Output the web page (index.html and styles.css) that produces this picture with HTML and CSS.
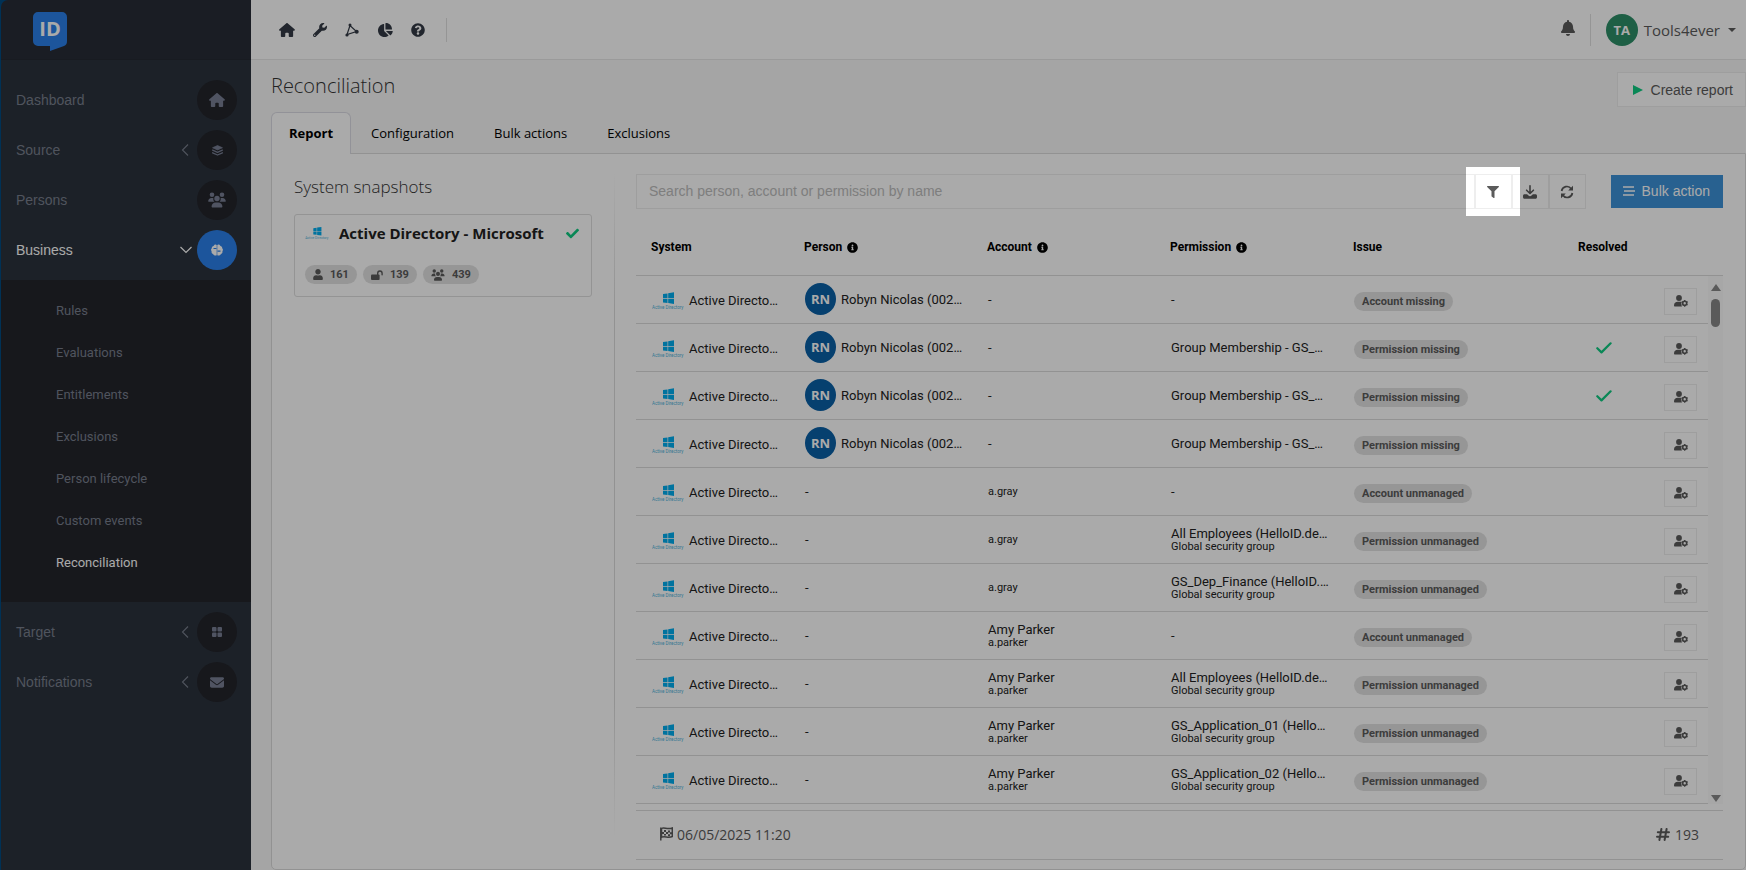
FILE: index.html
```html
<!DOCTYPE html>
<html lang="en">
<head>
    <meta charset="UTF-8">
    <title>Reconciliation - HelloID</title>
    <link rel="stylesheet" href="styles.css">
</head>
<body>

<!-- Icon sprite -->
<svg class="sprite" aria-hidden="true">
    <symbol id="i-home" viewBox="0 0 576 512"><path d="M575.8 255.5c0 18-15 32.1-32 32.1h-32l.7 160.2c0 2.7-.2 5.4-.5 8.1V472c0 22.1-17.9 40-40 40H392c-22.1 0-40-17.9-40-40V384c0-17.7-14.3-32-32-32H256c-17.7 0-32 14.3-32 32v88c0 22.1-17.9 40-40 40H104c-22.1 0-40-17.9-40-40V287.6H32c-18 0-32-14-32-32.1c0-9 3-17 10-24L266.4 8c7-7 15-8 22-8s15 2 21 7L564.8 231.5c8 7 12 15 11 24z"/></symbol>
    <symbol id="i-wrench" viewBox="0 0 512 512"><path d="M507.73 109.1c-2.24-9.03-13.54-12.09-20.12-5.51l-74.36 74.36-67.88-11.31-11.31-67.88 74.36-74.36c6.62-6.62 3.43-17.9-5.66-20.16-47.38-11.74-99.55.91-136.58 37.93-39.64 39.64-50.55 97.1-34.05 147.2L18.74 402.76c-24.99 24.99-24.99 65.51 0 90.5 24.99 24.99 65.51 24.99 90.5 0l213.21-213.21c50.12 16.71 107.47 5.68 147.37-34.22 37.07-37.07 49.7-89.32 37.91-136.73zM64 472c-13.25 0-24-10.75-24-24 0-13.26 10.75-24 24-24s24 10.74 24 24c0 13.25-10.75 24-24 24z"/></symbol>
    <symbol id="i-nodes" viewBox="0 0 14 14"><path d="M5 2.5L2 11.500L11.500 8.500Z" fill="none" stroke="currentColor" stroke-width="1.2"/><circle cx="5" cy="2" r="1.500"/><circle cx="2" cy="12" r="1.600"/><circle cx="11.700" cy="8.700" r="2"/></symbol>
    <symbol id="i-pie" viewBox="0 0 576 512"><path d="M304 240V16.6c0-9 7-16.6 16-16.6C443.7 0 544 100.3 544 224c0 9-7.6 16-16.6 16H304zM32 272C32 150.7 122.1 50.3 239 34.3c9.2-1.3 17 6.1 17 15.4V288L412.5 444.5c6.7 6.7 6.2 17.7-1.5 23.1C371.8 495.6 323.8 512 272 512C139.5 512 32 404.6 32 272zm526.4 16c9.3 0 16.6 7.8 15.4 17c-7.7 55.9-34.6 105.6-73.9 142.3c-6 5.6-15.4 5.2-21.2-.7L320 288H558.4z"/></symbol>
    <symbol id="i-question" viewBox="0 0 512 512"><path d="M504 256c0 136.997-111.043 248-248 248S8 392.997 8 256C8 119.083 119.043 8 256 8s248 111.083 248 248zM262.655 90c-54.497 0-89.255 22.957-116.549 63.758-3.536 5.286-2.353 12.415 2.715 16.258l34.699 26.31c5.205 3.947 12.621 3.008 16.665-2.122 17.864-22.658 30.113-35.797 57.303-35.797 20.429 0 45.698 13.148 45.698 32.958 0 14.976-12.363 22.667-32.534 33.976C247.128 238.528 216 254.941 216 296v4c0 6.627 5.373 12 12 12h56c6.627 0 12-5.373 12-12v-1.333c0-28.462 83.186-29.647 83.186-106.667 0-58.002-60.165-102-116.531-102zM256 338c-25.365 0-46 20.635-46 46 0 25.364 20.635 46 46 46s46-20.636 46-46c0-25.365-20.635-46-46-46z"/></symbol>
    <symbol id="i-info" viewBox="0 0 512 512"><path d="M256 8C119.043 8 8 119.083 8 256c0 136.997 111.043 248 248 248s248-111.003 248-248C504 119.083 392.957 8 256 8zm0 110c23.196 0 42 18.804 42 42s-18.804 42-42 42-42-18.804-42-42 18.804-42 42-42zm56 254c0 6.627-5.373 12-12 12h-88c-6.627 0-12-5.373-12-12v-24c0-6.627 5.373-12 12-12h12v-64h-12c-6.627 0-12-5.373-12-12v-24c0-6.627 5.373-12 12-12h64c6.627 0 12 5.373 12 12v100h12c6.627 0 12 5.373 12 12v24z"/></symbol>
    <symbol id="i-bell" viewBox="0 0 448 512"><path d="M224 512c35.32 0 63.97-28.65 63.97-64H160.03c0 35.35 28.65 64 63.97 64zm215.39-149.71c-19.32-20.76-55.47-51.99-55.47-154.29 0-77.7-54.48-139.9-127.94-155.16V32c0-17.67-14.32-32-31.98-32s-31.98 14.33-31.98 32v20.84C118.56 68.1 64.08 130.3 64.08 208c0 102.3-36.15 133.53-55.47 154.29-6 6.45-8.66 14.16-8.61 21.71.11 16.4 12.98 32 32.1 32h383.8c19.12 0 32-15.6 32.1-32 .05-7.55-2.61-15.27-8.61-21.71z"/></symbol>
    <symbol id="i-layers" viewBox="0 0 12 12"><path d="M6 .6L11.4 3L6 5.4L.6 3Z" stroke="currentColor" stroke-width=".8" stroke-linejoin="round"/><path d="M.7 5.6L6 8L11.3 5.6M.7 8.5L6 10.9L11.3 8.5" fill="none" stroke="currentColor" stroke-width="1.4" stroke-linecap="round" stroke-linejoin="round"/></symbol>
    <symbol id="i-users" viewBox="0 0 18 16"><circle cx="4" cy="2.7" r="2.3"/><circle cx="14" cy="2.7" r="2.3"/><circle cx="9" cy="6.5" r="2.7"/><path d="M.2 9.3C.2 7.3 1.6 6 3.4 6h1.2c.3 0 .6 0 .8.1c-.4 1.5 0 2.7 1 3.7H.7c-.3 0-.5-.2-.5-.5zM17.8 9.3c0-2-1.4-3.3-3.2-3.3h-1.2c-.3 0-.6 0-.8.1c.4 1.5 0 2.700-1 3.700h5.700c.3 0 .5-.2.5-.5zM3.6 14.5c0-2.300 1.700-4 4-4h2.800c2.300 0 4 1.700 4 4c0 .6-.4 1-1 1H4.600c-.6 0-1-.4-1-1z"/></symbol>
    <symbol id="i-brain" viewBox="0 0 12 12"><path d="M5.7 1v10.2C3.9 12 2.5 11.2 2.2 9.9C.9 9.5.3 8.5.6 7.3C-.2 6.3-.1 4.9.8 4.2C.8 2.9 1.5 2.1 2.6 2C3 .5 4.7 0 5.7 1zM6.3 1v10.2C8.100 12 9.500 11.200 9.800 9.900c1.300-.4 1.900-1.400 1.600-2.600c.8-1 .7-2.400-.2-3.100c0-1.300-.7-2.100-1.800-2.200C9 .5 7.300 0 6.300 1z"/><path d="M2.500 4.500h3M6.500 7.200h3" stroke="#2b80ea" stroke-width="1.200"/></symbol>
    <symbol id="i-grid" viewBox="0 0 10 10"><rect width="4.5" height="4.5" rx="1"/><rect x="5.5" width="4.5" height="4.5" rx="1"/><rect y="5.5" width="4.5" height="4.5" rx="1"/><rect x="5.5" y="5.5" width="4.5" height="4.5" rx="1"/></symbol>
    <symbol id="i-mail" viewBox="0 64 512 384"><path d="M48 64C21.5 64 0 85.5 0 112c0 15.1 7.1 29.3 19.2 38.4L236.8 313.6c11.4 8.5 27 8.5 38.4 0L492.8 150.4c12.1-9.1 19.2-23.3 19.2-38.4c0-26.5-21.5-48-48-48H48zM0 176V384c0 35.3 28.7 64 64 64H448c35.3 0 64-28.7 64-64V176L294.4 339.2c-22.8 17.1-54 17.1-76.8 0L0 176z"/></symbol>
    <symbol id="i-left" viewBox="0 0 8 12"><path d="M7 .5L1.5 6L7 11.5" fill="none" stroke="currentColor" stroke-width="1.1"/></symbol>
    <symbol id="i-down" viewBox="0 0 12 8"><path d="M.5 1L6 6.5L11.5 1" fill="none" stroke="currentColor" stroke-width="1.2"/></symbol>
    <symbol id="i-play" viewBox="0 0 10 10"><path d="M0 0L10 5L0 10Z"/></symbol>
    <symbol id="i-tick" viewBox="0 0 512 512"><path d="M173.898 439.404l-166.4-166.4c-9.997-9.997-9.997-26.206 0-36.204l36.203-36.204c9.997-9.998 26.207-9.998 36.204 0L192 312.69 432.095 72.596c9.997-9.997 26.207-9.997 36.204 0l36.203 36.204c9.997 9.997 9.997 26.206 0 36.204l-294.4 294.401c-9.998 9.997-26.207 9.997-36.204-.001z"/></symbol>
    <symbol id="i-check" viewBox="0 0 16 12"><path d="M1.3 6.200L5.500 10.400L14.600 1.300" fill="none" stroke="currentColor" stroke-width="2.200" stroke-linecap="round" stroke-linejoin="round"/></symbol>
    <symbol id="i-user" viewBox="0 0 448 512"><path d="M224 256c70.7 0 128-57.3 128-128S294.7 0 224 0 96 57.3 96 128s57.3 128 128 128zm89.6 32h-16.7c-22.2 10.2-46.9 16-72.9 16s-50.6-5.8-72.9-16h-16.7C60.2 288 0 348.2 0 422.4V464c0 26.5 21.5 48 48 48h352c26.5 0 48-21.5 48-48v-41.6c0-74.2-60.2-134.4-134.4-134.4z"/></symbol>
    <symbol id="i-unlock" viewBox="0 0 12 10"><rect y="4.5" width="8.6" height="5.5" rx="1"/><path d="M6.7 5V3.2a2.2 2.2 0 0 1 4.400 0V4.700" fill="none" stroke="currentColor" stroke-width="1.4" stroke-linecap="round"/></symbol>
    <symbol id="i-filter" viewBox="0 0 512 512"><path d="M487.976 0H24.028C2.71 0-8.047 25.866 7.058 40.971L192 225.941V432c0 7.831 3.821 15.17 10.237 19.662l80 55.98C298.02 518.69 320 507.493 320 487.98V225.941l184.947-184.97C520.021 25.896 509.338 0 487.976 0z"/></symbol>
    <symbol id="i-download" viewBox="0 0 14 14"><path d="M7 .8V8M3.6 5.2L7 8.5L10.4 5.2" fill="none" stroke="currentColor" stroke-width="1.6" stroke-linecap="round" stroke-linejoin="round"/><path d="M1.5 9.3h2.6l1.4 1.3c.9.8 2.1.8 3 0l1.4-1.300h2.600c.8 0 1.500.7 1.500 1.500v1.500c0 .9-.7 1.500-1.500 1.500h-11C.7 13.800 0 13.200 0 12.300v-1.500c0-.8.7-1.500 1.500-1.500z"/></symbol>
    <symbol id="i-refresh" viewBox="0 0 14 14"><path d="M1.6 6A5.3 5.3 0 0 1 11.3 4M12.4 8A5.3 5.3 0 0 1 2.7 10" fill="none" stroke="currentColor" stroke-width="1.7"/><path d="M13 .8V5.600H8.200ZM1 13.200V8.400H5.800Z"/></symbol>
    <symbol id="i-bars" viewBox="0 0 12 10"><path d="M0 1h11M1 5h11M0 9h11" stroke="currentColor" stroke-width="1.6"/></symbol>
    <symbol id="i-usergear" viewBox="0 0 14 12"><circle cx="5" cy="3" r="2.9"/><path d="M0 10.4C0 8.200 1.600 6.800 3.700 6.800h2.600c.6 0 1 .1 1.500.3c-.8 1.500-.6 3 .2 4.400H.9c-.5 0-.9-.4-.9-1.100z"/><circle cx="10.700" cy="8.300" r="2" fill="none" stroke="currentColor" stroke-width="1.600"/><path d="M10.700 4.900v1M10.700 10.700v1M7.800 6.600l.9.500M12.700 9.500l.9.500M7.800 10l.9-.5M12.700 7.100l.9-.5" stroke="currentColor" stroke-width="1.300"/></symbol>
    <symbol id="i-flag" viewBox="0 0 13 14"><path d="M.8.5V13.5" stroke="currentColor" stroke-width="1.5"/><path d="M1.5 1.500C4-.2 7 2.800 12.300 1V9.500C8 11.500 5 8.500 1.500 10.200Z" fill="none" stroke="currentColor" stroke-width="1.500"/><path d="M4 3h2v2H4zM8 3.500h2v2H8zM6 5h2v2H6zM4 7h2v1.500H4zM8 7.300h2v2H8zM2 5h2v2H2zM10 5.300h2v2h-2z"/></symbol>
    <symbol id="i-hash" viewBox="0 0 14 13"><path d="M5.4 1L3.4 12M10.6 1L8.600 12M1.800 4.200H13M1 8.800H12.200" fill="none" stroke="currentColor" stroke-width="2" stroke-linecap="round"/></symbol>
    <symbol id="i-ad" viewBox="0 0 64 38"><path d="M22 6L31 4.8V14.6H22ZM32.400 4.400L44 2.600V14.600H32.400ZM22 16H31V24L22 22.800ZM32.400 16H44V26L32.400 24.200Z" fill="#00adef"/><text x="0" y="36" font-family="Roboto, sans-serif" font-size="9" fill="#4fb4dd">Active Directory</text></symbol>
</svg>

<aside class="sidebar">
    <a class="brand" href="#" aria-label="HelloID">
        <svg width="34" height="39" viewBox="0 0 34 39"><path d="M5 0H29a5 5 0 0 1 5 5V29c0 3-1 4-3 5L17 39V34H5a5 5 0 0 1-5-5V5a5 5 0 0 1 5-5z" fill="#2b80ea"/><text x="17" y="24" text-anchor="middle" font-family="Open Sans, sans-serif" font-weight="700" font-size="20" fill="#fff">ID</text></svg>
    </a>
    <nav class="menu">
        <a class="menu-item" href="#"><span>Dashboard</span><i class="dot"><svg width="16" height="14"><use href="#i-home"/></svg></i></a>
        <a class="menu-item" href="#"><span>Source</span><svg width="8" height="12"><use href="#i-left"/></svg><i class="dot"><svg width="11" height="11"><use href="#i-layers"/></svg></i></a>
        <a class="menu-item" href="#"><span>Persons</span><i class="dot"><svg width="18" height="16"><use href="#i-users"/></svg></i></a>
        <a class="menu-item active" href="#"><span>Business</span><svg width="12" height="8"><use href="#i-down"/></svg><i class="dot"><svg width="12" height="12"><use href="#i-brain"/></svg></i></a>
        <div class="submenu">
            <a href="#">Rules</a>
            <a href="#">Evaluations</a>
            <a href="#">Entitlements</a>
            <a href="#">Exclusions</a>
            <a href="#">Person lifecycle</a>
            <a href="#">Custom events</a>
            <a class="active" href="#">Reconciliation</a>
        </div>
        <a class="menu-item" href="#"><span>Target</span><svg width="8" height="12"><use href="#i-left"/></svg><i class="dot"><svg width="10" height="10"><use href="#i-grid"/></svg></i></a>
        <a class="menu-item" href="#"><span>Notifications</span><svg width="8" height="12"><use href="#i-left"/></svg><i class="dot"><svg width="14" height="11"><use href="#i-mail"/></svg></i></a>
    </nav>
</aside>

<div class="page">
    <header class="topbar">
        <nav class="shortcuts">
            <a href="#" aria-label="Home"><svg width="16" height="14"><use href="#i-home"/></svg></a>
            <a href="#" aria-label="Settings"><svg width="14" height="14"><use href="#i-wrench"/></svg></a>
            <a href="#" aria-label="Flows"><svg width="14" height="14"><use href="#i-nodes"/></svg></a>
            <a href="#" aria-label="Reports"><svg width="16" height="14"><use href="#i-pie"/></svg></a>
            <a href="#" aria-label="Help"><svg width="14" height="14"><use href="#i-question"/></svg></a>
        </nav>
        <button class="bell" type="button" aria-label="Alerts"><svg width="14" height="16"><use href="#i-bell"/></svg></button>
        <button class="account" type="button"><span class="avatar green">TA</span>Tools4ever<i class="caret"></i></button>
    </header>

    <main>
        <div class="page-head">
            <h1>Reconciliation</h1>
            <button class="btn" type="button"><svg class="ok" width="10" height="10"><use href="#i-play"/></svg>Create report</button>
        </div>
        <nav class="tabs">
            <a class="active" href="#">Report</a>
            <a href="#">Configuration</a>
            <a href="#">Bulk actions</a>
            <a href="#">Exclusions</a>
        </nav>

        <div class="panel">
            <section class="snapshots">
                <h2>System snapshots</h2>
                <div class="card">
                    <div class="card-head">
                        <svg width="24" height="14"><use href="#i-ad"/></svg>
                        <h3>Active Directory - Microsoft</h3>
                        <svg class="ok" width="13" height="13"><use href="#i-tick"/></svg>
                    </div>
                    <div class="counts">
                        <span class="badge"><svg width="10" height="11"><use href="#i-user"/></svg>161</span>
                        <span class="badge"><svg width="12" height="10"><use href="#i-unlock"/></svg>139</span>
                        <span class="badge"><svg width="14" height="12"><use href="#i-users"/></svg>439</span>
                    </div>
                </div>
            </section>
            <div class="splitter"></div>

            <section class="report">
                <div class="toolbar">
                    <input type="text" aria-label="Search" placeholder="Search person, account or permission by name">
                    <button class="tool" type="button" aria-label="Filter"><svg width="12" height="12"><use href="#i-filter"/></svg><span class="spotlight"></span></button>
                    <button class="tool" type="button" aria-label="Download"><svg width="14" height="14"><use href="#i-download"/></svg></button>
                    <button class="tool" type="button" aria-label="Refresh"><svg width="14" height="14"><use href="#i-refresh"/></svg></button>
                    <button class="bulk" type="button"><svg width="12" height="10"><use href="#i-bars"/></svg>Bulk action</button>
                </div>

                <div class="grid">
                    <table>
                        <colgroup><col class="c-system"><col class="c-wide"><col class="c-wide"><col class="c-wide"><col><col class="c-resolved"><col class="c-action"></colgroup>
                        <thead>
                            <tr>
                                <th>System</th>
                                <th>Person <svg width="11" height="11"><use href="#i-info"/></svg></th>
                                <th>Account <svg width="11" height="11"><use href="#i-info"/></svg></th>
                                <th>Permission <svg width="11" height="11"><use href="#i-info"/></svg></th>
                                <th>Issue</th>
                                <th>Resolved</th>
                                <th></th>
                            </tr>
                        </thead>
                        <tbody id="rows"></tbody>
                    </table>
                    <div class="scroll">
                        <div class="track"><i class="up"></i><i class="thumb"></i><i class="down"></i></div>
                    </div>
                </div>

                <footer class="summary">
                    <span><svg width="13" height="14"><use href="#i-flag"/></svg>06/05/2025 11:20</span>
                    <span class="total"><svg width="14" height="13"><use href="#i-hash"/></svg>193</span>
                </footer>
            </section>
        </div>
    </main>
</div>

<script>
    const robyn = '<div class="cell"><span class="avatar">RN</span>Robyn Nicolas (002…</div>';
    const gray = '<small>a.gray</small>';
    const amy = 'Amy Parker<small>a.parker</small>';
    const membership = 'Group Membership - GS_…';
    const group = (name) => `${name}<small>Global security group</small>`;

    // person, account, permission, issue, resolved
    const rows = [
        [robyn, '-', '-', 'Account missing', false],
        [robyn, '-', membership, 'Permission missing', true],
        [robyn, '-', membership, 'Permission missing', true],
        [robyn, '-', membership, 'Permission missing', false],
        ['-', gray, '-', 'Account unmanaged', false],
        ['-', gray, group('All Employees (HelloID.de…'), 'Permission unmanaged', false],
        ['-', gray, group('GS_Dep_Finance (HelloID.…'), 'Permission unmanaged', false],
        ['-', amy, '-', 'Account unmanaged', false],
        ['-', amy, group('All Employees (HelloID.de…'), 'Permission unmanaged', false],
        ['-', amy, group('GS_Application_01 (Hello…'), 'Permission unmanaged', false],
        ['-', amy, group('GS_Application_02 (Hello…'), 'Permission unmanaged', false]
    ];

    document.getElementById('rows').innerHTML = rows.map(([person, account, permission, issue, resolved]) => `
        <tr>
            <td><div class="cell"><svg width="32" height="19"><use href="#i-ad"/></svg>Active Directo…</div></td>
            <td>${person}</td>
            <td>${account}</td>
            <td>${permission}</td>
            <td><span class="badge">${issue}</span></td>
            <td>${resolved ? '<svg class="ok" width="16" height="12"><use href="#i-check"/></svg>' : ''}</td>
            <td><button class="row-btn" type="button" aria-label="Actions"><svg width="14" height="12"><use href="#i-usergear"/></svg></button></td>
        </tr>`).join('');
</script>
</body>
</html>
```
FILE: styles.css
```css
* { box-sizing: border-box; }
body { margin: 0; min-height: 100vh; display: flex; font-family: "Open Sans", "Noto Sans", sans-serif; font-size: 14px; color: #2b2d33; background: #f8f8f8; }
svg { display: block; flex: none; fill: currentColor; }
a { color: inherit; text-decoration: none; }
button { font: inherit; color: inherit; background: none; border: 0; padding: 0; cursor: pointer; }
h1, h2, h3 { margin: 0; }
.sprite { position: absolute; width: 0; height: 0; }
.ok { color: #0ecb81; }

/* Sidebar */
.sidebar { width: 251px; flex: none; display: flex; flex-direction: column; padding-left: 1px; background: #004a80; color: #787f8d; font-family: "Liberation Sans", Arial, sans-serif; }
.brand { display: block; height: 60px; padding: 12px 32px; background: #282c36; border-bottom: 1px solid #252932; border-top-left-radius: 7px; }
.menu { flex: 1; padding-top: 15px; background: #2b323c; }
.menu-item { display: flex; align-items: center; height: 50px; padding: 0 14px 0 15px; gap: 8px; }
.menu-item span { flex: 1; }
.menu-item.active { color: #fff; }
.menu-item.active > svg { margin-right: -3px; }
.dot { width: 40px; height: 40px; border-radius: 50%; background: #23242b; color: #787f94; display: flex; align-items: center; justify-content: center; }
.active .dot { background: #2b80ea; color: #fff; }
.submenu { display: flex; flex-direction: column; margin: 5px 0; padding: 10px 0 18px 55px; background: #23242b; font-family: Roboto, sans-serif; font-size: 13px; line-height: 42px; }
.submenu .active { color: #fff; }

/* Top bar */
.page { flex: 1; min-width: 0; }
.topbar { height: 60px; display: flex; align-items: center; background: #fff; border-bottom: 1px solid #e8e8e8; padding-right: 10px; color: #333a45; }
.shortcuts { display: flex; align-items: center; gap: 18px; margin-left: 28px; padding-right: 21px; height: 24px; border-right: 1px solid #e0e0e0; }
.bell { margin-left: auto; padding-right: 15px; height: 32px; border-right: 1px solid #e0e0e0; color: #5b5b5b; }
.bell svg { margin-bottom: 3px; }
.account { display: flex; align-items: center; gap: 6px; margin-left: 15px; font-size: 15px; color: #5b5b5b; }
.caret { margin-left: 2px; border: 4px solid transparent; border-top-color: #5b5b5b; border-bottom: 0; }
.avatar { width: 31px; height: 32px; border-radius: 50%; background: #0960a7; color: #fff; font-family: "Open Sans", sans-serif; font-size: 13px; font-weight: 700; line-height: 32px; text-align: center; flex: none; }
.avatar.green { width: 32px; background: #2d8f68; }

/* Page head and tabs */
main { padding-left: 20px; }
.page-head { display: flex; justify-content: space-between; align-items: flex-start; height: 52px; padding-top: 12px; }
h1 { font-size: 20px; font-weight: 300; line-height: 28px; color: #333; }
.btn { display: flex; align-items: center; gap: 8px; height: 35px; padding: 0 12px 0 15px; background: #fff; border: 1px solid #eee; font-family: "Liberation Sans", Arial, sans-serif; color: #5b5b5b; }
.tabs { display: flex; font-size: 13px; color: #000; }
.tabs a { height: 41px; padding: 0 19px; line-height: 41px; border: 1px solid transparent; border-bottom: 0; }
.tabs .active { height: 42px; margin-bottom: -1px; padding: 0 17px; font-weight: 700; background: #fff; border-color: #dcdce4; border-radius: 6px 6px 0 0; position: relative; }

/* Panel */
.panel { display: flex; padding: 20px 22px 9px 22px; background: #fff; border: 1px solid #dcdcdc; border-radius: 0 0 5px 5px; }
.snapshots { width: 298px; flex: none; }
h2 { font-size: 17px; font-weight: 300; line-height: 26px; color: #333; }
.card { margin-top: 14px; padding: 9px 10px; height: 83px; border: 1px solid #dedede; border-radius: 3px; }
.card-head { display: flex; align-items: center; gap: 10px; padding-right: 2px; }
h3 { flex: 1; font-size: 15px; font-weight: 700; line-height: 18px; white-space: nowrap; color: #222; }
.counts { display: flex; gap: 6px; margin-top: 23px; }
.badge { display: inline-flex; align-items: center; gap: 7px; height: 19px; padding: 0 8px; border-radius: 10px; background: #e2e2e2; color: #5b5b5b; font-family: Roboto, sans-serif; font-size: 11px; font-weight: 700; white-space: nowrap; }
.splitter { width: 1px; flex: none; margin: 0 21px 24px 22px; background: linear-gradient(#fff, #dcdcdc 20%, #dcdcdc 80%, #fff); }
.report { flex: 1; min-width: 0; }

/* Toolbar */
.toolbar { display: flex; font-family: "Liberation Sans", Arial, sans-serif; color: #5b5b5b; }
.toolbar input { flex: 1; min-width: 0; height: 35px; padding: 0 12px 2px; border: 1px solid #eee; background: #fff; font: inherit; }
.toolbar input::placeholder { color: #bdbdbd; }
.tool { position: relative; width: 37px; height: 35px; border: 1px solid #eee; display: flex; align-items: center; justify-content: center; }
.bulk { display: flex; align-items: center; gap: 7px; margin: 1px 0 1px 25px; padding: 0 13px 1px 12px; background: #3c92d8; color: #fff; }

/* Dims everything but the highlighted button */
.spotlight { position: absolute; inset: -8px -9px -8px -10px; z-index: 10; box-shadow: 0 0 0 2000px rgba(0, 0, 0, 0.333); pointer-events: none; }

/* Table */
.grid { display: flex; margin-top: 8px; font-family: Roboto, sans-serif; font-size: 13px; color: #222; }
table { flex: 1; min-width: 0; table-layout: fixed; border-collapse: separate; border-spacing: 0; }
.c-system { width: 153px; }
.c-wide { width: 183px; }
.c-resolved { width: 82px; }
.c-action { width: 63px; }
th { height: 59px; padding: 2px 0 0 15px; border-bottom: 1px solid #dcdcdc; font-size: 12px; text-align: left; color: #000; white-space: nowrap; }
th svg { display: inline-block; margin-left: 2px; vertical-align: -2px; }
td { height: 48px; padding: 0 0 0 16px; border-bottom: 1px solid #dcdcdc; line-height: 15px; white-space: nowrap; }
td:nth-child(1) { padding-top: 1px; }
td:nth-child(2) { padding-bottom: 1px; }
td:nth-child(6) { padding: 0 0 0 33px; }
td:nth-child(7) { padding: 3px 0 0 19px; }
small { display: block; font-size: 11px; line-height: 12px; }
.cell { display: flex; align-items: center; gap: 5px; }
td .badge { margin-top: 3px; vertical-align: middle; }
.row-btn { width: 33px; height: 27px; border: 1px solid #eee; display: flex; align-items: center; justify-content: center; color: #5b5b5b; }
.scroll { width: 15px; display: flex; flex-direction: column; padding-top: 58px; }
.track { flex: 1; display: flex; flex-direction: column; align-items: center; padding: 8px 0 2px; border-top: 1px solid #dcdcdc; background: #fbfbfb; }
.up { border: 5px solid transparent; border-bottom: 7px solid #888; border-top: 0; }
.thumb { width: 9px; height: 28px; margin-top: 8px; border-radius: 5px; background: #888; }
.down { margin-top: auto; border: 5px solid transparent; border-top: 7px solid #888; border-bottom: 0; }

/* Summary */
.summary { display: flex; justify-content: space-between; align-items: center; height: 50px; margin-top: 6px; padding: 0 24px 2px; border-top: 1px solid #dcdcdc; border-bottom: 1px solid #dcdcdc; color: #5b5b5b; }
.summary span { display: flex; align-items: center; gap: 4px; }
.summary .total { gap: 5px; }
```
